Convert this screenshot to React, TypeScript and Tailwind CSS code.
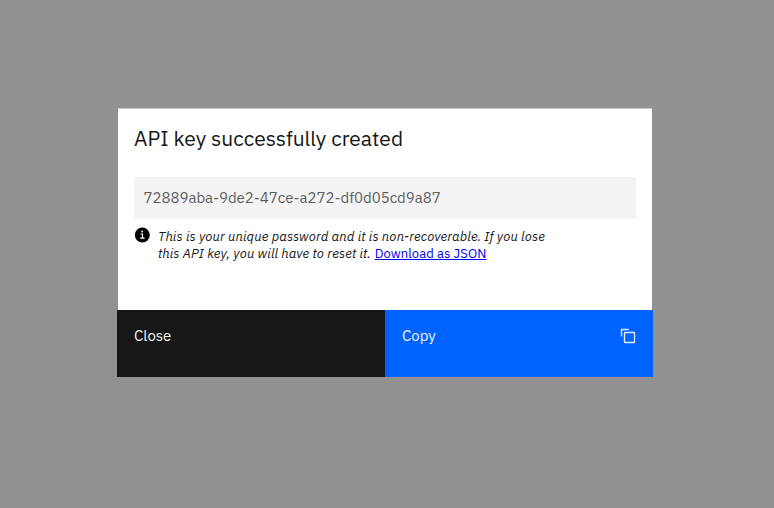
export default function App() {
  return (
    <main className="flex h-screen w-screen items-start overflow-hidden bg-[#919191] pt-[108px] pl-[117px] font-['IBM_Plex_Sans','Open_Sans',sans-serif] whitespace-nowrap antialiased">
      <section role="dialog" aria-label="API key" className="flex h-[269px] w-[536px] flex-col text-[#161616]">
        <div className="mx-px h-[202px] w-[534px] border-t border-[#c8c8c8] bg-white px-4 pt-[12px]">
          <h1 className="h-[56px] text-[21px] leading-[34px]">API key successfully created</h1>
          <div className="h-[42px] w-[502px] bg-[#f3f3f3] pl-[9.5px] text-[15px] leading-[42px] tracking-[-0.02px] text-[#5f5f5f]">72889aba-9de2-47ce-a272-df0d05cd9a87</div>
          <div className="flex pt-2 text-[13px] leading-[17px]">
            <svg className="mr-2 size-4 shrink-0" viewBox="0 0 16 16"><circle cx="8.3" cy="8" r="7.5" fill="black" /><path d="M6.5 7h2v4.2m-2.3 0h4.4" stroke="white" strokeWidth="1.2" fill="none" /><circle cx="8.2" cy="4.5" r="0.9" fill="white" /></svg>
            <p className="pt-px"><span className="tracking-[0.14px] italic">This is your unique password and it is non-recoverable. If you lose<br />this API key, you will have to reset it.</span> <a href="#" className="ml-[0.5px] tracking-[0.08px] text-[#0000ee] underline">Download as JSON</a></p>
          </div>
        </div>
        <div className="grid h-[67px] grid-cols-2 text-[15px] leading-[20px] text-[#f4f4f4]">
          <button className="flex items-start bg-[#171717] px-[17px] pt-4">Close</button>
          <button className="flex items-start justify-between bg-[#0062ff] px-[17px] pt-4">Copy
            <svg className="mt-0.5 size-4" viewBox="0 0 16 16" fill="none" stroke="#e2edff" strokeWidth="1.35"><rect x="4.5" y="4.5" width="10" height="10" rx="0.4" /><path d="M1.5 8.5V1.5H8.8" /></svg>
          </button>
        </div>
      </section>
    </main>
  );
}
